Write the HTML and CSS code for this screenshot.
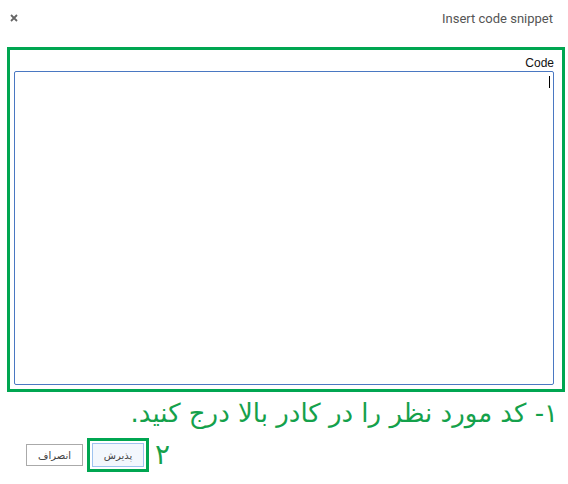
FILE: index.html
```html
<!DOCTYPE html>
<html lang="fa">
<head>
    <meta charset="UTF-8">
    <title>Insert code snippet</title>
    <link rel="stylesheet" href="styles.css">
</head>
<body>
    <div class="dialog">
        <div class="dialog-header">
            <svg class="close" width="8" height="8" viewBox="0 0 8 8">
                <path d="M1 1 L7 7 M7 1 L1 7" stroke="#666" stroke-width="1.8" fill="none"/>
            </svg>
            <span class="title">Insert code snippet</span>
        </div>

        <div class="highlight code-box">
            <div class="code-label">Code</div>
            <div class="code-wrap">
                <textarea class="code-input"></textarea>
                <span class="caret"></span>
            </div>
        </div>

        <p class="hint" dir="rtl">۱- کد مورد نظر را در کادر بالا درج کنید.</p>

        <div class="actions">
            <button class="btn">انصراف</button>
            <div class="highlight ok-box">
                <button class="btn btn-ok">پذیرش</button>
            </div>
            <span class="step">۲</span>
        </div>
    </div>
</body>
</html>
```

FILE: styles.css
```css
body {
    margin: 0;
    background: #fff;
    font-family: "Liberation Sans", Arial, sans-serif;
}
.dialog {
    width: 568px;
    height: 484px;
}
.dialog-header {
    display: flex;
    justify-content: space-between;
    align-items: center;
    height: 36px;
    padding: 0 15px 0 10px;
}
.close {
    display: block;
}
.title {
    color: #555;
    font-family: Roboto, sans-serif;
    font-size: 13px;
}
.highlight {
    border: 3px solid #00a651;
}
.code-box {
    margin: 11px 0 0 7px;
    width: 544px;
    padding: 5px 4px 4px 4px;
}
.code-label {
    text-align: right;
    font-size: 12px;
    color: #111;
    height: 16px;
    line-height: 16px;
    padding-right: 4px;
}
.code-wrap {
    position: relative;
}
.code-input {
    display: block;
    box-sizing: border-box;
    width: 540px;
    height: 314px;
    margin: 0;
    border: 1px solid #4a78c2;
    border-radius: 2px;
    resize: none;
    outline: none;
}
.caret {
    position: absolute;
    right: 8px;
    top: 5px;
    width: 1px;
    height: 12px;
    background: #000;
}
.hint {
    margin: 4px 10px 0 0;
    color: #14a14b;
    font-family: "DejaVu Sans", sans-serif;
    font-size: 26px;
    line-height: 34px;
}
.actions {
    display: flex;
    align-items: center;
    margin: 8px 0 0 26px;
    gap: 4px;
}
.btn {
    font-family: "DejaVu Sans", sans-serif;
    font-size: 10px;
    color: #444;
    background: #fff;
    border: 1px solid #aaa;
    width: 57px;
    height: 22px;
    padding: 0;
}
.ok-box {
    padding: 2px;
}
.btn-ok {
    width: 52px;
    height: 24px;
    background: #f3f7fd;
    border-color: #9fc3ef;
}
.step {
    margin-left: 2px;
    color: #14a14b;
    font-family: "DejaVu Sans", sans-serif;
    font-size: 28px;
    line-height: 26px;
}
```
